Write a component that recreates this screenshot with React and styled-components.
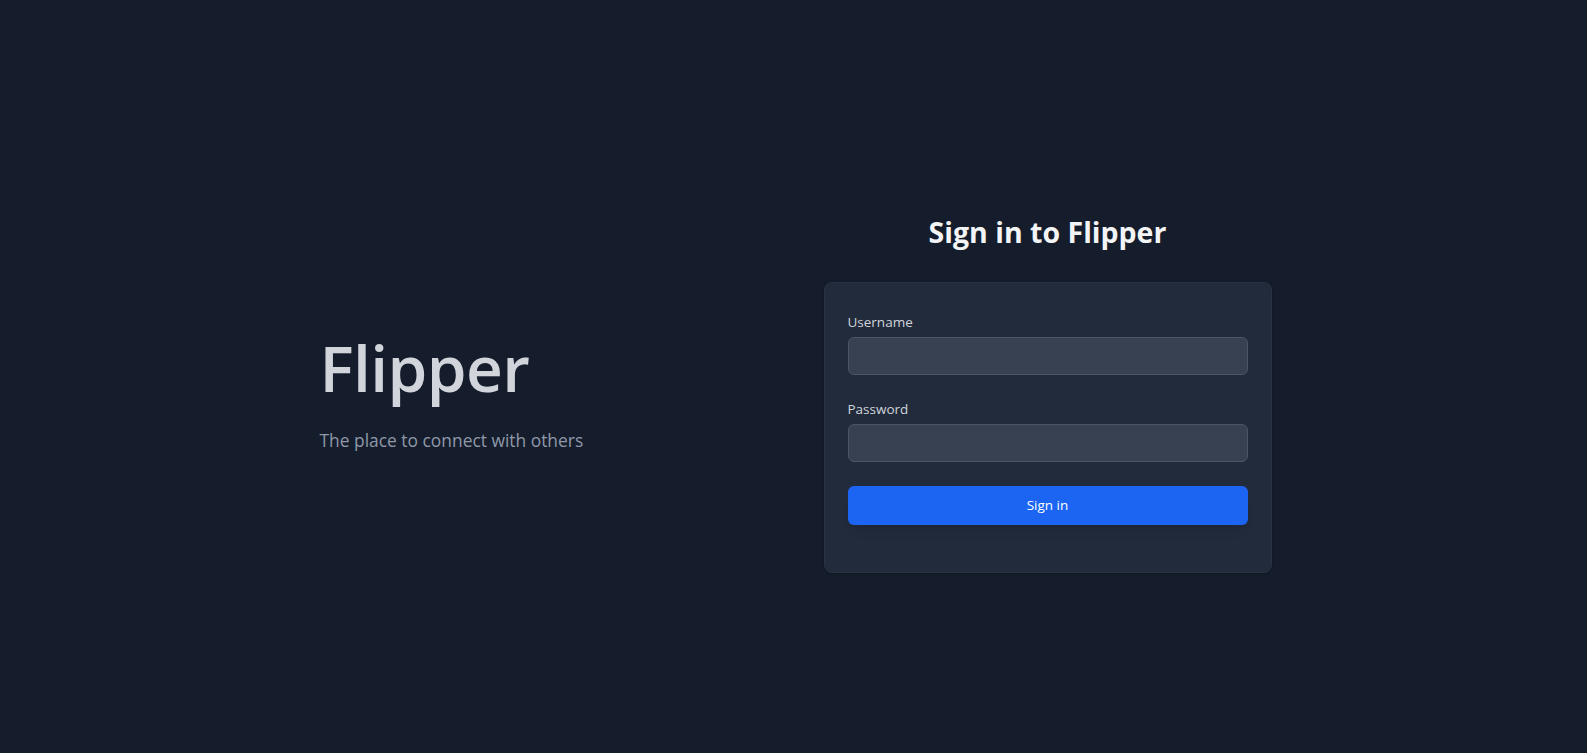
import React from "react";
import styled, { createGlobalStyle } from "styled-components";

const Global = createGlobalStyle`
  html, body { margin: 0; padding: 0; background: #151d2c; }
  body { font-family: "Open Sans", "Noto Sans", sans-serif; -webkit-font-smoothing: antialiased; }
  * { box-sizing: border-box; }
`;

const Page = styled.main`
  min-height: 753px;
  display: flex;
  align-items: center;
  justify-content: center;
  gap: 64px;
  padding: 34px 0 0 2px;
  background: #151d2c;
`;

const Intro = styled.section`
  width: 442px;
  display: flex;
  flex-direction: column;
  padding: 0 0 1px 2px;
`;

const Brand = styled.h1`
  margin: 0;
  font-size: 64px;
  line-height: 66px;
  font-weight: 650;
  color: #d1d5db;
  letter-spacing: -0.6px;
`;

const Tagline = styled.p`
  margin: 27px 0 0;
  font-size: 17.4px;
  line-height: 24px;
  color: #8f98a8;
  font-weight: 400;
`;

const Side = styled.section`
  width: 448px;
  display: flex;
  flex-direction: column;
`;

const Title = styled.h2`
  margin: 0 0 33px;
  text-align: center;
  font-size: 28.5px;
  line-height: 34px;
  font-weight: 700;
  color: #f3f4f6;
`;

const Card = styled.form`
  background: #222b3c;
  border: 1px solid #283244;
  border-radius: 8px;
  padding: 29px 23px 47px;
  display: flex;
  flex-direction: column;
  gap: 24px;
  box-shadow: 0 1px 3px rgba(0, 0, 0, 0.25);
`;

const Field = styled.div`
  display: flex;
  flex-direction: column;
  gap: 5px;
`;

const Label = styled.label`
  font-size: 13.5px;
  line-height: 20px;
  color: #d1d5db;
`;

const Input = styled.input`
  height: 38px;
  border-radius: 6px;
  border: 1px solid #4b5563;
  background: #374151;
  color: #f9fafb;
  padding: 0 12px;
  font: inherit;
  font-size: 14px;
  outline: none;
`;

const Button = styled.button`
  height: 39px;
  border: none;
  border-radius: 6px;
  background: #1c64f2;
  color: #ffffff;
  font: inherit;
  font-size: 13.5px;
  cursor: pointer;
  box-shadow: 0 10px 12px -6px rgba(0, 0, 0, 0.15);
`;

export default function App() {
  return (
    <>
      <Global />
      <Page>
        <Intro>
          <Brand>Flipper</Brand>
          <Tagline>The place to connect with others</Tagline>
        </Intro>
        <Side>
          <Title>Sign in to Flipper</Title>
          <Card onSubmit={(e) => e.preventDefault()}>
            <Field>
              <Label htmlFor="username">Username</Label>
              <Input id="username" type="text" />
            </Field>
            <Field>
              <Label htmlFor="password">Password</Label>
              <Input id="password" type="password" />
            </Field>
            <Button type="submit">Sign in</Button>
          </Card>
        </Side>
      </Page>
    </>
  );
}
